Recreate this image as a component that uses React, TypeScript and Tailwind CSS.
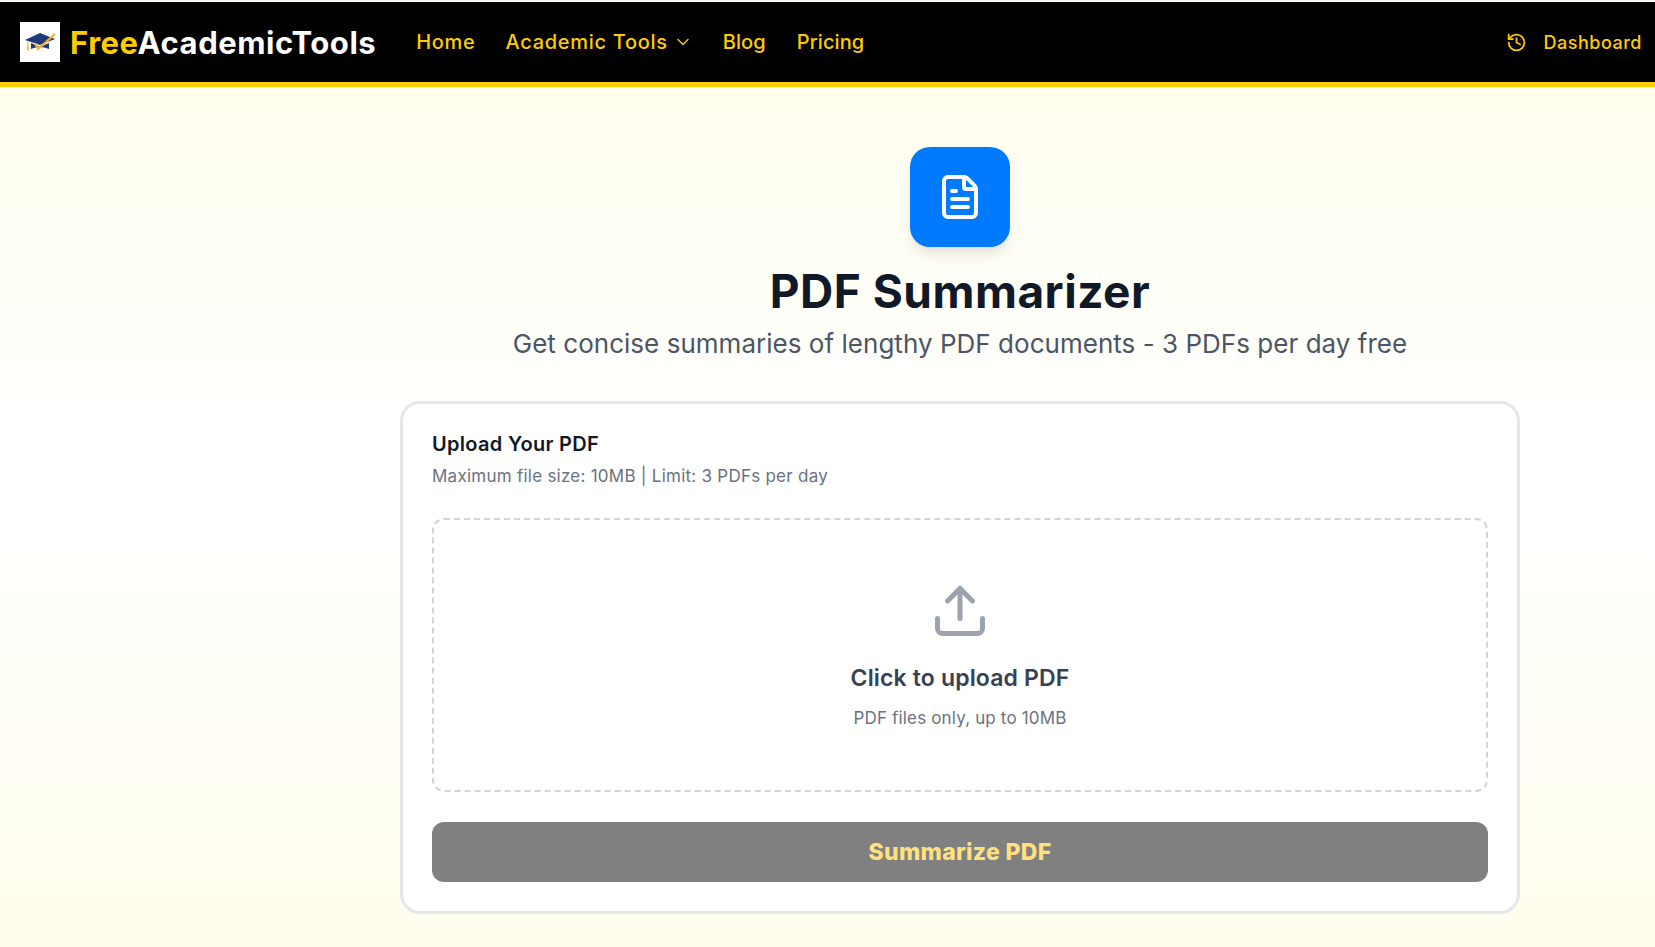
import { ChevronDown, FileText, History, Upload } from "lucide-react";

function Logo() {
  return (
    <div className="flex h-10 w-10 items-center justify-center bg-white">
      <svg viewBox="0 0 40 40" className="h-10 w-10">
        <path d="M5 18 L20 11 L35 17 L20 23 Z" fill="#1e3a7b" />
        <path d="M11 21 L11 27 Q20 23 29 27 L29 21 L20 25 Z" fill="#1e3a7b" />
        <path d="M8 19 V25" stroke="#f5b942" strokeWidth="1.2" />
        <path d="M7 25 h2 v3.5 h-2 z" fill="#f5b942" />
        <path d="M15 21 L18 27 L35 12" fill="none" stroke="#f7b52c" strokeWidth="2.2" />
      </svg>
    </div>
  );
}

export default function App() {
  return (
    <div className="min-h-[947px] bg-gradient-to-b from-[#fffeeb] via-white to-[#fffdec] font-['Inter','Liberation_Sans',sans-serif]">
      <div className="h-[2px] bg-[#fdf6ee]" />
      <header className="flex h-[85px] items-center justify-between border-b-[5px] border-[#ffcc00] bg-black pl-5 pr-[13px]">
        <div className="flex items-center">
          <Logo />
          <span className="ml-[10px] text-[31px] leading-none font-bold tracking-[0.55px] text-white">
            <span className="text-[#ffcc00]">Free</span>AcademicTools
          </span>
          <nav className="ml-[40px] flex items-center text-[20px] font-medium tracking-[0.7px] text-[#ffcc00]">
            <a>Home</a>
            <a className="ml-[30px] flex items-center">
              Academic Tools
              <ChevronDown className="ml-[5px] h-5 w-5" strokeWidth={1.6} />
            </a>
            <a className="ml-[30px] tracking-[0.1px]">Blog</a>
            <a className="ml-[31px] tracking-[0.1px]">Pricing</a>
          </nav>
        </div>
        <a className="flex items-center text-[18px] font-medium tracking-[0.5px] text-[#ffcc00]">
          <History className="h-[21px] w-[21px]" />
          <span className="ml-[17px]">Dashboard</span>
        </a>
      </header>
      <main className="flex flex-col items-center pl-[265px] pt-[60px]">
        <div className="flex h-[100px] w-[100px] items-center justify-center rounded-[20px] bg-[#007bff] text-white shadow-lg">
          <FileText className="h-12 w-12" />
        </div>
        <h1 className="mt-[17px] text-[46px] leading-[54px] font-bold tracking-[0.5px] text-[#111827]">PDF Summarizer</h1>
        <p className="mt-[8px] text-[26px] leading-[36px] tracking-[0.03px] text-[#4b5563]">
          Get concise summaries of lengthy PDF documents - 3 PDFs per day free
        </p>
        <section className="mt-[39px] w-[1120px] rounded-[20px] border-[3px] border-[#e5e7eb] bg-white px-[29px] pt-[26px] pb-[29px]">
          <h2 className="text-[20px] leading-7 font-semibold tracking-[0.3px] text-[#111827]">Upload Your PDF</h2>
          <p className="mt-[6px] text-[17px] leading-6 tracking-[0.25px] text-[#6b7280]">
            Maximum file size: 10MB | Limit: 3 PDFs per day
          </p>
          <div className="mt-[30px] flex h-[274px] flex-col items-center rounded-[12px] border-2 border-dashed border-[#d1d5db] pt-[61px]">
            <Upload className="h-[60px] w-[60px] text-[#9ca3af]" />
            <p className="mt-[21px] text-[23px] leading-8 font-semibold tracking-[0.15px] text-[#374151]">Click to upload PDF</p>
            <p className="mt-[12px] text-[17px] leading-6 tracking-[0.16px] text-[#6b7280]">PDF files only, up to 10MB</p>
          </div>
          <button className="mt-[30px] h-[60px] w-full rounded-[12px] bg-[#808080] text-[23px] font-extrabold tracking-[0.3px] text-[#ffe17f]">
            Summarize PDF
          </button>
        </section>
      </main>
    </div>
  );
}
